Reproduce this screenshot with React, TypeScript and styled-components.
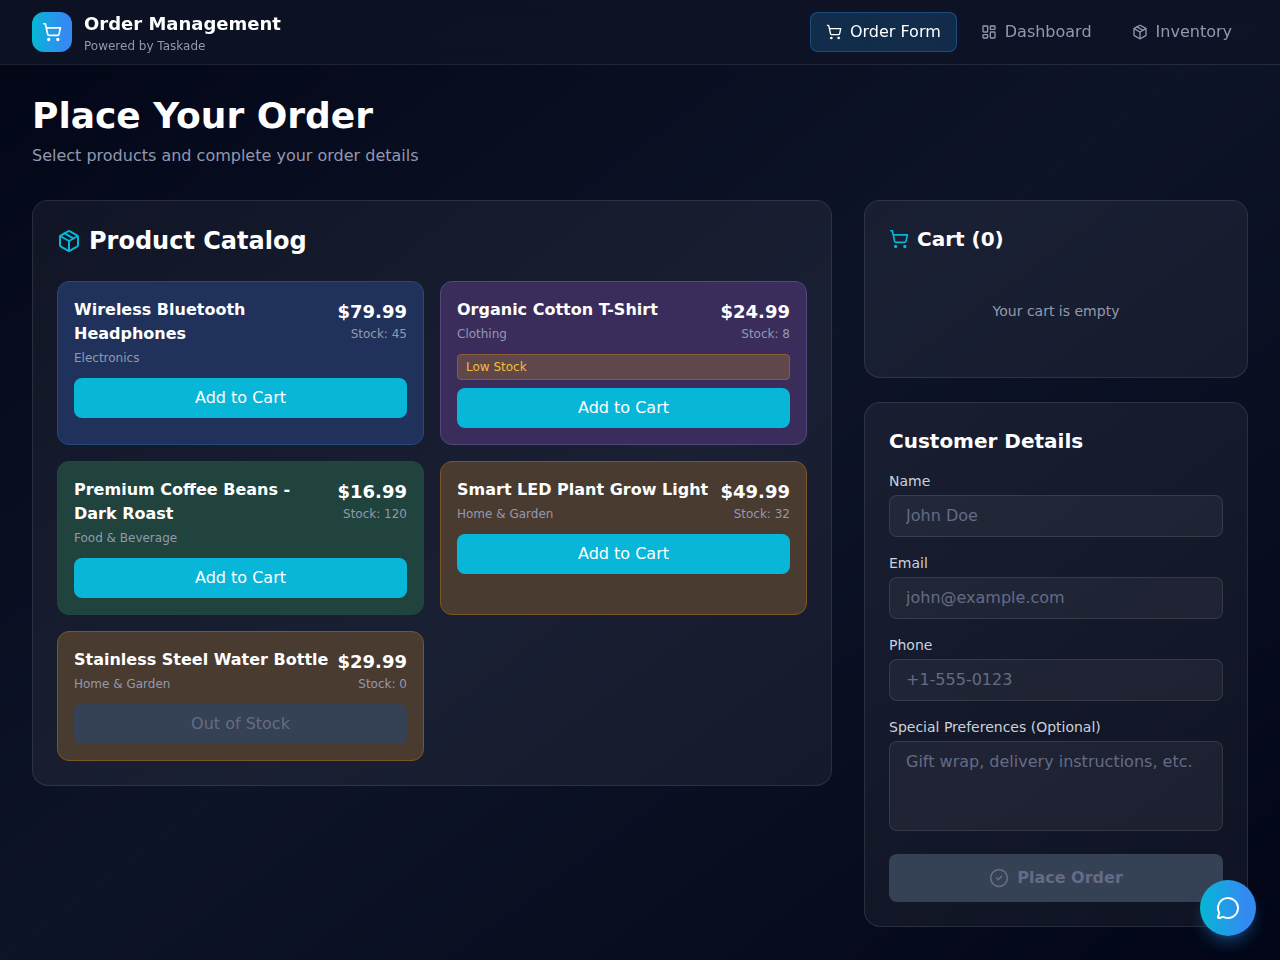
import React, { useState } from "react";
import styled, { createGlobalStyle, css } from "styled-components";
import {
  CircleCheck,
  LayoutDashboard,
  MessageCircle,
  Package,
  ShoppingCart,
} from "lucide-react";

const GlobalStyle = createGlobalStyle`
  *, *::before, *::after { box-sizing: border-box; }
  body {
    margin: 0;
    font-family: "DejaVu Sans", sans-serif;
    font-size: 16px;
    line-height: 24px;
    color: #ffffff;
    background: #020617;
  }
  h1, h2, h3, p { margin: 0; }
  button, input, textarea { font: inherit; color: inherit; }
`;

const muted = "#9299af";
const faint = "#656b86";
const accentGradient = "linear-gradient(to right, #06b6d4, #338bf2 80%)";

const Page = styled.div`
  min-height: 100vh;
  background: linear-gradient(to bottom right, #020617, #0e1428, #020617);
`;

const Header = styled.header`
  position: sticky;
  top: 0;
  z-index: 10;
  background: rgba(14, 20, 38, 0.85);
  box-shadow: 0 1px 0 rgba(255, 255, 255, 0.1);
  backdrop-filter: blur(12px);
`;

const HeaderInner = styled.div`
  display: flex;
  flex-wrap: wrap;
  align-items: center;
  justify-content: space-between;
  gap: 8px;
  min-height: 64px;
  padding: 0 32px;
`;

const Brand = styled.div`
  display: flex;
  align-items: center;
  gap: 12px;
`;

const BrandMark = styled.div`
  display: flex;
  align-items: center;
  justify-content: center;
  width: 40px;
  height: 40px;
  border-radius: 12px;
  background: ${accentGradient};
`;

const BrandName = styled.p`
  font-size: 18px;
  line-height: 28px;
  font-weight: 700;
`;

const SmallNote = styled.p`
  font-size: 12px;
  line-height: 16px;
  color: ${muted};
`;

const Nav = styled.nav`
  display: flex;
  flex-wrap: wrap;
  gap: 8px;
`;

const NavButton = styled.button<{ $active: boolean }>`
  display: flex;
  align-items: center;
  gap: 8px;
  padding: 8px 16px;
  border: 0;
  border-radius: 8px;
  background: transparent;
  color: ${muted};
  cursor: pointer;
  ${({ $active }) =>
    $active &&
    css`
      color: #ffffff;
      background: linear-gradient(to right, #102d4a, #132b4a);
      box-shadow: inset 0 0 0 1px #1e4b80;
    `}
`;

const Main = styled.main`
  padding: 32px;
`;

const Intro = styled.div`
  display: grid;
  gap: 8px;
  margin-bottom: 32px;
`;

const PageTitle = styled.h1`
  font-size: 36px;
  line-height: 40px;
  font-weight: 700;
`;

const Lead = styled.p`
  color: ${muted};
`;

const Columns = styled.div`
  display: grid;
  grid-template-columns: repeat(3, minmax(0, 1fr));
  align-items: start;
  gap: 32px;
  @media (max-width: 960px) {
    grid-template-columns: minmax(0, 1fr);
  }
`;

const Panel = styled.section<{ $wide?: boolean }>`
  padding: 24px;
  border: 1px solid rgba(255, 255, 255, 0.1);
  border-radius: 16px;
  background: rgba(255, 255, 255, 0.05);
  @media (min-width: 961px) {
    grid-column: span ${({ $wide }) => ($wide ? 2 : 1)};
  }
`;

const Sidebar = styled.div`
  display: grid;
  gap: 24px;
`;

const PanelTitle = styled.h2<{ $large?: boolean }>`
  display: flex;
  align-items: center;
  gap: 8px;
  margin-bottom: ${({ $large }) => ($large ? 24 : 16)}px;
  font-size: ${({ $large }) => ($large ? 24 : 20)}px;
  line-height: ${({ $large }) => ($large ? 32 : 28)}px;
  font-weight: 700;
  svg { color: #06b6d4; }
`;

const ProductGrid = styled.div`
  display: grid;
  grid-template-columns: repeat(2, minmax(0, 1fr));
  gap: 16px;
  @media (max-width: 640px) {
    grid-template-columns: minmax(0, 1fr);
  }
`;

type Tone = "blue" | "purple" | "green" | "amber";

const tones: Record<Tone, { fill: string; edge: string }> = {
  blue: { fill: "#20325b", edge: "#1e4b80" },
  purple: { fill: "#3a2d5c", edge: "#54477c" },
  green: { fill: "#20433d", edge: "#20463f" },
  amber: { fill: "#493b30", edge: "#7b5622" },
};

const ProductCard = styled.article<{ $tone: Tone }>`
  padding: 16px;
  border: 1px solid ${({ $tone }) => tones[$tone].edge};
  border-radius: 12px;
  background: ${({ $tone }) => tones[$tone].fill};
`;

const ProductHead = styled.div`
  display: flex;
  align-items: flex-start;
  justify-content: space-between;
  margin-bottom: 12px;
`;

const ProductInfo = styled.div`
  display: grid;
  gap: 4px;
`;

const ProductName = styled.h3`
  font-size: 16px;
  line-height: 24px;
  font-weight: 600;
`;

const PriceBlock = styled.div`
  flex-shrink: 0;
  text-align: right;
`;

const Price = styled.p`
  font-size: 18px;
  line-height: 28px;
  font-weight: 700;
`;

const LowStock = styled.p`
  margin-bottom: 8px;
  padding: 4px 8px;
  border: 1px solid #8a5c38;
  border-radius: 4px;
  background: #60474c;
  color: #f4bd38;
  font-size: 12px;
  line-height: 16px;
`;

const ActionButton = styled.button<{ $large?: boolean }>`
  display: flex;
  align-items: center;
  justify-content: center;
  gap: 8px;
  width: 100%;
  padding: ${({ $large }) => ($large ? 12 : 8)}px 16px;
  border: 0;
  border-radius: 8px;
  background: #08b6d8;
  color: #ffffff;
  font-weight: ${({ $large }) => ($large ? 600 : 400)};
  cursor: pointer;
  &:disabled {
    background: #354154;
    color: ${faint};
    cursor: not-allowed;
  }
`;

const EmptyCart = styled.p`
  padding: 32px 0;
  text-align: center;
  font-size: 14px;
  line-height: 20px;
  color: ${muted};
`;

const OrderForm = styled.form`
  display: grid;
  gap: 16px;
`;

const Label = styled.label`
  display: block;
  margin-bottom: 4px;
  font-size: 14px;
  line-height: 20px;
  color: #cbd1dd;
`;

const fieldStyle = css`
  width: 100%;
  padding: 8px 16px;
  border: 1px solid rgba(255, 255, 255, 0.1);
  border-radius: 8px;
  background: rgba(255, 255, 255, 0.05);
  outline: none;
  &::placeholder { color: ${faint}; opacity: 1; }
  &:focus { border-color: #06b6d4; }
`;

const TextInput = styled.input`
  ${fieldStyle}
  display: block;
`;

const TextArea = styled.textarea`
  ${fieldStyle}
  resize: none;
`;

const ChatButton = styled.button`
  position: fixed;
  right: 24px;
  bottom: 24px;
  z-index: 20;
  display: flex;
  align-items: center;
  justify-content: center;
  width: 56px;
  height: 56px;
  padding: 0;
  border: 0;
  border-radius: 50%;
  background: ${accentGradient};
  box-shadow: 0 10px 15px -3px rgba(40, 120, 200, 0.4), 0 4px 6px -4px rgba(40, 120, 200, 0.4);
  cursor: pointer;
`;

interface Product {
  name: string;
  category: string;
  price: string;
  stock: number;
  tone: Tone;
}

const products: Product[] = [
  { name: "Wireless Bluetooth Headphones", category: "Electronics", price: "$79.99", stock: 45, tone: "blue" },
  { name: "Organic Cotton T-Shirt", category: "Clothing", price: "$24.99", stock: 8, tone: "purple" },
  { name: "Premium Coffee Beans - Dark Roast", category: "Food & Beverage", price: "$16.99", stock: 120, tone: "green" },
  { name: "Smart LED Plant Grow Light", category: "Home & Garden", price: "$49.99", stock: 32, tone: "amber" },
  { name: "Stainless Steel Water Bottle", category: "Home & Garden", price: "$29.99", stock: 0, tone: "amber" },
];

const navItems = [
  { label: "Order Form", Icon: ShoppingCart },
  { label: "Dashboard", Icon: LayoutDashboard },
  { label: "Inventory", Icon: Package },
];

const inputs = [
  { id: "name", label: "Name", type: "text", placeholder: "John Doe" },
  { id: "email", label: "Email", type: "email", placeholder: "john@example.com" },
  { id: "phone", label: "Phone", type: "tel", placeholder: "+1-555-0123" },
];

export default function App() {
  const [cartCount, setCartCount] = useState(0);
  const [view, setView] = useState("Order Form");

  return (
    <Page>
      <GlobalStyle />
      <Header>
        <HeaderInner>
          <Brand>
            <BrandMark>
              <ShoppingCart size={20} />
            </BrandMark>
            <div>
              <BrandName>Order Management</BrandName>
              <SmallNote>Powered by Taskade</SmallNote>
            </div>
          </Brand>
          <Nav>
            {navItems.map(({ label, Icon }) => (
              <NavButton key={label} type="button" $active={view === label} onClick={() => setView(label)}>
                <Icon size={16} />
                {label}
              </NavButton>
            ))}
          </Nav>
        </HeaderInner>
      </Header>

      <Main>
        <Intro>
          <PageTitle>Place Your Order</PageTitle>
          <Lead>Select products and complete your order details</Lead>
        </Intro>

        <Columns>
          <Panel $wide>
            <PanelTitle $large>
              <Package size={24} />
              Product Catalog
            </PanelTitle>
            <ProductGrid>
              {products.map((product) => (
                <ProductCard key={product.name} $tone={product.tone}>
                  <ProductHead>
                    <ProductInfo>
                      <ProductName>{product.name}</ProductName>
                      <SmallNote>{product.category}</SmallNote>
                    </ProductInfo>
                    <PriceBlock>
                      <Price>{product.price}</Price>
                      <SmallNote>{`Stock: ${product.stock}`}</SmallNote>
                    </PriceBlock>
                  </ProductHead>
                  {product.stock > 0 && product.stock < 10 && <LowStock>Low Stock</LowStock>}
                  <ActionButton
                    type="button"
                    disabled={product.stock === 0}
                    onClick={() => setCartCount((count) => count + 1)}
                  >
                    {product.stock === 0 ? "Out of Stock" : "Add to Cart"}
                  </ActionButton>
                </ProductCard>
              ))}
            </ProductGrid>
          </Panel>

          <Sidebar>
            <Panel>
              <PanelTitle>
                <ShoppingCart size={20} />
                {`Cart (${cartCount})`}
              </PanelTitle>
              {cartCount === 0 && <EmptyCart>Your cart is empty</EmptyCart>}
            </Panel>

            <Panel>
              <PanelTitle>Customer Details</PanelTitle>
              <OrderForm onSubmit={(event) => event.preventDefault()}>
                {inputs.map(({ id, label, type, placeholder }) => (
                  <div key={id}>
                    <Label htmlFor={id}>{label}</Label>
                    <TextInput id={id} type={type} placeholder={placeholder} />
                  </div>
                ))}
                <div>
                  <Label htmlFor="preferences">Special Preferences (Optional)</Label>
                  <TextArea id="preferences" rows={3} placeholder="Gift wrap, delivery instructions, etc." />
                </div>
                <ActionButton type="submit" $large disabled={cartCount === 0}>
                  <CircleCheck size={20} />
                  Place Order
                </ActionButton>
              </OrderForm>
            </Panel>
          </Sidebar>
        </Columns>
      </Main>

      <ChatButton type="button" aria-label="Open chat">
        <MessageCircle size={24} />
      </ChatButton>
    </Page>
  );
}
